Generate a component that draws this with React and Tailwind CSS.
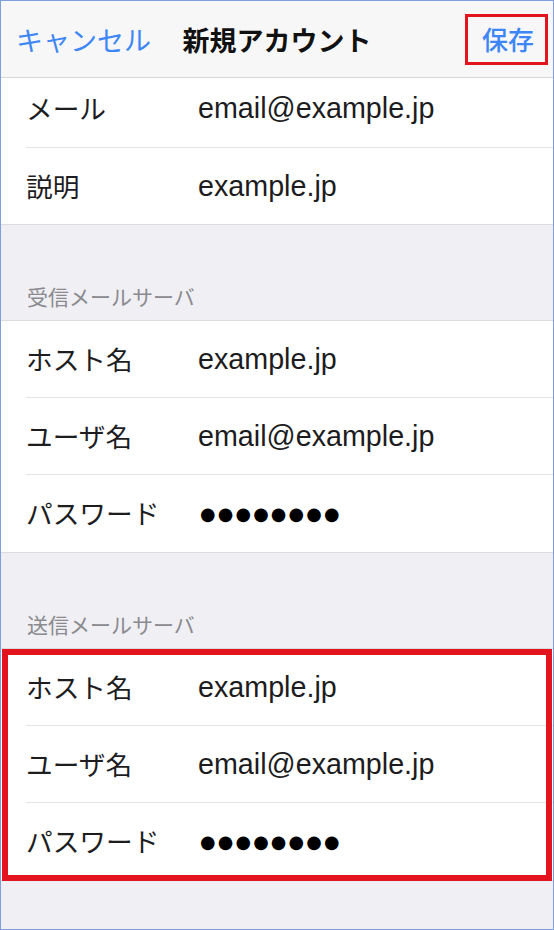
const jp = { fontFamily: '"Noto Sans CJK JP", "Liberation Sans", sans-serif' };

const rowsIncoming = [
  { label: "ホスト名", value: "example.jp" },
  { label: "ユーザ名", value: "email@example.jp" },
  { label: "パスワード", value: "●●●●●●●●", secret: true },
];

const Row = ({ label, value, secret, last, className = "" }) => (
  <div className="pl-[25px]">
    <div
      className={`flex items-center ${last ? "" : "border-b border-[#e3e3e6]"} ${className}`}
    >
      <div className="w-[172px] shrink-0 text-[26.7px] text-[#1d1d1f] leading-none" style={jp}>
        {label}
      </div>
      {secret ? (
        <div className="pl-[2px] text-[17.8px] tracking-[2.2px] text-black leading-none font-['DejaVu_Sans',sans-serif]">
          {value}
        </div>
      ) : (
        <div className="text-[28.7px] text-[#1c1c1e] leading-none font-['Liberation_Sans',sans-serif]">
          {value}
        </div>
      )}
    </div>
  </div>
);

const SectionLabel = ({ children }) => (
  <div className="h-[95px] flex items-end pb-[12px] pl-[26px]">
    <span className="text-[21px] leading-[24px] text-[#8a8a8f]" style={jp}>
      {children}
    </span>
  </div>
);

export default function App() {
  return (
    <div className="w-[554px] h-[930px] overflow-hidden border border-[#7f9fdc] bg-[#efeff4]">
      {/* nav bar */}
      <div className="grid grid-cols-[1fr_auto_1fr] items-center h-[77px] border-b border-[#d6d6d9] bg-[#f7f7f8]">
        <button className="justify-self-start pl-[15px] text-[27px] text-[#3c86f6] leading-none" style={jp}>
          キャンセル
        </button>
        <div className="text-[27px] font-bold text-[#111] leading-none" style={jp}>
          新規アカウント
        </div>
        <button
          className="justify-self-end mr-[5px] h-[51px] pl-[14px] pr-[11px] flex items-center border-[3px] border-[#e3141e] text-[26px] font-medium text-[#3c86f6] leading-none"
          style={jp}
        >
          保存
        </button>
      </div>

      {/* account */}
      <div className="bg-white border-b border-[#dcdce0]">
        <Row label="メール" value="email@example.jp" className="h-[70px] pb-[8px]" />
        <Row label="説明" value="example.jp" last className="h-[76px]" />
      </div>

      <SectionLabel>受信メールサーバ</SectionLabel>
      <div className="bg-white border-y border-[#dcdce0]">
        {rowsIncoming.map((r, i) => (
          <Row key={r.label} {...r} last={i === rowsIncoming.length - 1} className="h-[77px]" />
        ))}
      </div>

      <SectionLabel>送信メールサーバ</SectionLabel>
      <div className="relative bg-white border-y border-[#dcdce0]">
        {rowsIncoming.map((r, i) => (
          <Row key={r.label} {...r} last={i === rowsIncoming.length - 1} className="h-[77px]" />
        ))}
        <div className="absolute left-[1px] right-[1px] top-0 -bottom-[1px] border-[6px] border-[#e3141e] pointer-events-none" />
      </div>
    </div>
  );
}
